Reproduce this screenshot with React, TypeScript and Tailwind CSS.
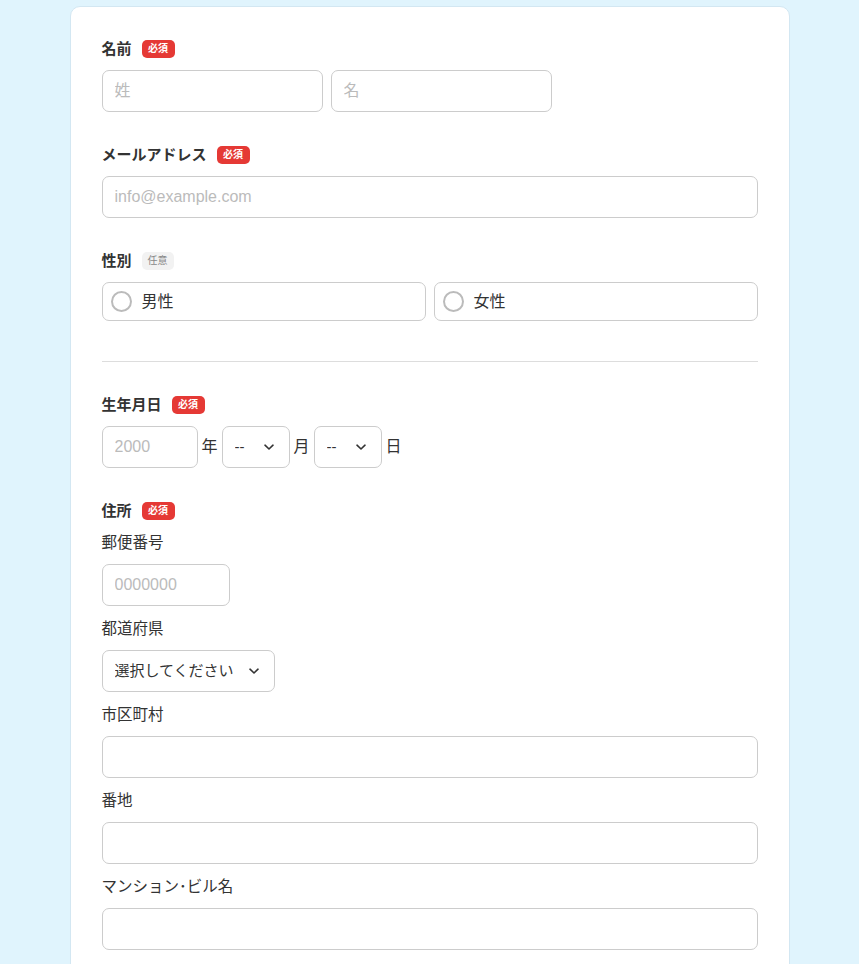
import React from 'react';

const font = { fontFamily: '"Liberation Sans", "Noto Sans CJK JP", sans-serif' };

const Required: React.FC = () => (
    <span className="inline-flex items-center h-[18px] px-[6.5px] rounded-[5px] bg-[#e53935] text-white text-[10px] font-bold leading-none">必須</span>
);

const Optional: React.FC = () => (
    <span className="inline-flex items-center h-[18px] px-[6px] rounded-[5px] bg-[#f2f2f2] text-[#888] text-[10px] leading-none">任意</span>
);

const Label: React.FC<{ text: string; required?: boolean }> = ({ text, required = true }) => (
    <div className="flex items-center gap-[10px] h-[22px] mb-[10px]">
        <span className="text-[15px] font-bold text-[#333]">{text}</span>
        {required ? <Required /> : <Optional />}
    </div>
);

const SubLabel: React.FC<{ text: string }> = ({ text }) => (
    <div className="h-[22px] mb-[10px] text-[15.5px] text-[#333] leading-[22px]">{text}</div>
);

const boxCls = 'h-[42px] rounded-[7px] border border-[#cccccc] bg-white px-3 text-[#333] outline-none';
const inputCls = `${boxCls} text-[16px] placeholder:text-[#bbbbbb]`;

const Chevron: React.FC = () => (
    <svg width="14" height="14" viewBox="0 0 14 14" fill="none" className="pointer-events-none absolute right-[14px] top-1/2 -translate-y-1/2">
        <path d="M3 5.2 L7 9 L11 5.2" stroke="#333" strokeWidth="1.6" strokeLinecap="round" strokeLinejoin="round" />
    </svg>
);

const Select: React.FC<{ width: string; value: string }> = ({ width, value }) => (
    <div className={`relative ${width}`}>
        <select className={`${boxCls} w-full appearance-none pr-8 text-[15px]`} defaultValue={value}>
            <option>{value}</option>
        </select>
        <Chevron />
    </div>
);

const Radio: React.FC<{ text: string }> = ({ text }) => (
    <label className="flex-1 flex items-center gap-[10px] h-[39px] rounded-[7px] border border-[#cccccc] px-2">
        <span className="w-[21px] h-[21px] rounded-full border-2 border-[#bbbbbb] bg-white" />
        <span className="text-[16px] text-[#333]">{text}</span>
    </label>
);

export default function App() {
    return (
        <div className="min-h-screen bg-[#e0f4fd] pt-[6px]" style={font}>
            <div className="mx-auto w-[720px] rounded-t-[10px] border border-[#d3e7f2] bg-white px-[31px] pt-[31px] pb-10">
                {/* 名前 */}
                <Label text="名前" />
                <div className="flex gap-2">
                    <input className={`${inputCls} w-[221px]`} placeholder="姓" />
                    <input className={`${inputCls} w-[221px]`} placeholder="名" />
                </div>

                {/* メール */}
                <div className="mt-[32px]">
                    <Label text="メールアドレス" />
                    <input className={`${inputCls} w-full`} placeholder="info@example.com" />
                </div>

                {/* 性別 */}
                <div className="mt-[32px]">
                    <Label text="性別" required={false} />
                    <div className="flex gap-2">
                        <Radio text="男性" />
                        <Radio text="女性" />
                    </div>
                </div>

                <hr className="mt-[40px] border-t border-[#dddddd]" />

                {/* 生年月日 */}
                <div className="mt-[32px]">
                    <Label text="生年月日" />
                    <div className="flex items-center gap-1 text-[16px] text-[#333]">
                        <input className={`${inputCls} w-[96px]`} placeholder="2000" />
                        <span>年</span>
                        <Select width="w-[68px]" value="--" />
                        <span>月</span>
                        <Select width="w-[68px]" value="--" />
                        <span>日</span>
                    </div>
                </div>

                {/* 住所 */}
                <div className="mt-[32px]">
                    <Label text="住所" />
                    <SubLabel text="郵便番号" />
                    <input className={`${inputCls} w-[128px]`} placeholder="0000000" />
                    <div className="mt-3">
                        <SubLabel text="都道府県" />
                        <Select width="w-[173px]" value="選択してください" />
                    </div>
                    <div className="mt-3">
                        <SubLabel text="市区町村" />
                        <input className={`${inputCls} w-full`} />
                    </div>
                    <div className="mt-3">
                        <SubLabel text="番地" />
                        <input className={`${inputCls} w-full`} />
                    </div>
                    <div className="mt-3">
                        <SubLabel text="マンション･ビル名" />
                        <input className={`${inputCls} w-full`} />
                    </div>
                </div>
            </div>
        </div>
    );
}
